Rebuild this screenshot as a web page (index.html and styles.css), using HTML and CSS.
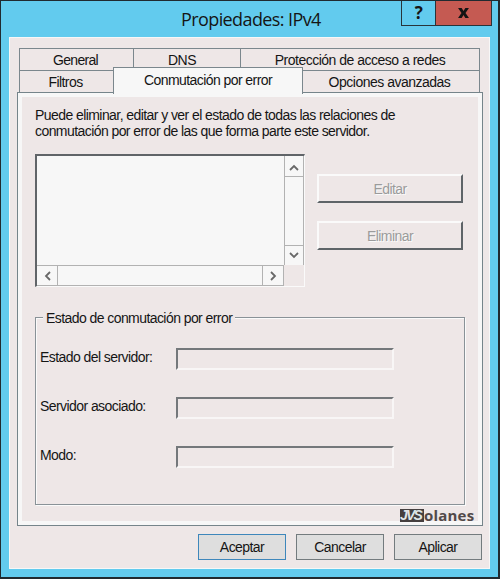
FILE: index.html
```html
<!DOCTYPE html>
<html lang="es">
<head>
<meta charset="utf-8">
<title>Propiedades: IPv4</title>
<link rel="stylesheet" href="styles.css">
</head>
<body>
<div class="window">
  <header class="titlebar">
    <h1 class="title">Propiedades: IPv4</h1>
    <div class="controls">
      <button class="help">?</button>
      <button class="close" aria-label="Cerrar"><svg width="11" height="10" viewBox="0 0 12 11"><path d="M0 0H4L6 3.2 8 0H12L8.2 5.5 12 11H8L6 7.8 4 11H0L3.8 5.5Z" fill="#141414"/></svg></button>
    </div>
  </header>
  <main class="client">
    <nav class="tabs">
      <div class="tabrow first">
        <span class="tab general">General</span><span class="tab dns">DNS</span><span class="tab proteccion">Protección de acceso a redes</span>
      </div>
      <div class="tabrow second">
        <span class="tab filtros">Filtros</span><span class="tab active">Conmutación por error</span><span class="tab opciones">Opciones avanzadas</span>
      </div>
    </nav>
    <section class="panel">
      <p class="intro"><span class="line">Puede eliminar, editar y ver el estado de todas las relaciones de</span><span class="line">conmutación por error de las que forma parte este servidor.</span></p>
      <div class="relations">
        <div class="listbox">
          <div class="list"></div>
          <div class="vscroll">
            <span class="arrow"><svg width="10" height="7" viewBox="0 0 10 7"><path d="M1 6L5 2 9 6"/></svg></span>
            <span class="arrow"><svg width="10" height="7" viewBox="0 0 10 7"><path d="M1 1L5 5 9 1"/></svg></span>
          </div>
          <div class="hscroll">
            <span class="arrow"><svg width="7" height="10" viewBox="0 0 7 10"><path d="M6 1L2 5 6 9"/></svg></span>
            <span class="arrow"><svg width="7" height="10" viewBox="0 0 7 10"><path d="M1 1L5 5 1 9"/></svg></span>
          </div>
          <div class="corner"></div>
        </div>
        <div class="actions">
          <button class="flat" disabled>Editar</button>
          <button class="flat" disabled>Eliminar</button>
        </div>
      </div>
      <div class="group">
        <h2 class="legend"><span>Estado de conmutación por error</span></h2>
        <div class="field"><span class="label">Estado del servidor:</span><span class="value"></span></div>
        <div class="field"><span class="label">Servidor asociado:</span><span class="value"></span></div>
        <div class="field"><span class="label">Modo:</span><span class="value"></span></div>
      </div>
      <div class="brand"><span class="mark">JVS</span><span class="rest">olanes</span></div>
    </section>
    <footer class="buttons">
      <button class="push default">Aceptar</button>
      <button class="push">Cancelar</button>
      <button class="push">Aplicar</button>
    </footer>
  </main>
</div>
</body>
</html>
```

FILE: styles.css
```css
* { box-sizing: border-box; }
body { margin: 0; font: 14px/16px "Liberation Sans", Arial, sans-serif; letter-spacing: -0.57px; color: #151515; }
button { font: inherit; letter-spacing: inherit; color: inherit; padding: 0; margin: 0; border-radius: 0; }
svg { display: block; }
.window { width: 500px; height: 579px; background: #62cbee; border: 1px solid #202a30; border-right-width: 2px; border-bottom-width: 2px; padding: 0 8px 8px 8px; }
.titlebar { height: 36px; display: grid; grid-template-columns: 1fr 91px; margin-right: -2px; }
.title { margin: 0; padding: 6px 0 0 172px; font: 18px/24px "Open Sans", sans-serif; letter-spacing: -0.6px; white-space: nowrap; }
.controls { display: flex; height: 25px; border: 1px solid #28343a; border-top: 0; }
.help { width: 34px; background: #62cbee; border: 0; border-right: 1px solid #28343a; font: bold 17px/24px "Open Sans", sans-serif; }
.close { flex: 1; background: #c55a52; border: 0; display: flex; align-items: center; justify-content: center; }
.client { width: 481px; height: 532px; background: #eee7e7; border: 1px solid #f7f7f7; padding: 10px 7px 0 7px; }
.tabs { position: relative; padding: 0 2px; }
.tabrow { display: flex; height: 22px; border: 1px solid #7b878d; border-bottom: 0; }
.tab { display: flex; justify-content: center; align-items: center; white-space: nowrap; }
.general { width: 114px; padding-right: 2px; border-right: 1px solid #7b878d; letter-spacing: -0.7px; }
.dns { width: 107px; padding-right: 10px; border-right: 1px solid #7b878d; }
.proteccion { flex: 1; letter-spacing: -0.5px; }
.filtros { width: 93px; padding-right: 2px; }
.active { width: 190px; height: 27px; margin-top: -4px; padding-bottom: 3px; background: #f7f7f7; border: 1px solid #7b878d; border-bottom: 0; z-index: 1; }
.opciones { flex: 1; padding-right: 3px; letter-spacing: -0.5px; }
.panel { width: 466px; height: 434px; background: #eee7e7; border: 1px solid #75848a; box-shadow: inset 0 0 0 4px #f7f7f7; padding: 14px 17px 0; }
.intro { margin: 0; height: 47px; }
.line { display: block; white-space: nowrap; }
.relations { display: flex; gap: 12px; }
.listbox { width: 270px; height: 133px; display: grid; grid-template: 1fr 21px / 1fr 20px; border: 2px solid #606468; border-right: 1px solid #fafafa; border-bottom: 1px solid #fafafa; background: #f7f7f7; }
.vscroll, .hscroll { display: flex; justify-content: space-between; border: 1px solid #b2b2b2; }
.vscroll { flex-direction: column; border-top: 0; border-bottom: 0; }
.hscroll { border-left: 0; }
.arrow { display: flex; align-items: center; justify-content: center; }
.arrow path { fill: none; stroke: #686868; stroke-width: 1.8; }
.vscroll .arrow { width: 18px; height: 20px; }
.hscroll .arrow { width: 21px; height: 19px; }
.vscroll .arrow:first-child { height: 21px; padding-top: 2px; border-bottom: 1px solid #b2b2b2; }
.vscroll .arrow:last-child { border-top: 1px solid #b2b2b2; }
.hscroll .arrow:first-child { border-right: 1px solid #b2b2b2; }
.hscroll .arrow:last-child { border-left: 1px solid #b2b2b2; }
.corner { background: #eee7e7; }
.actions { display: flex; flex-direction: column; gap: 18px; padding-top: 20px; }
.flat { width: 146px; height: 29px; background: #eee7e7; border: 2px solid #5e6468; border-top-color: #fafafa; border-left-color: #fafafa; color: #9b9b9b; text-shadow: 1px 1px #fafafa; }
.group { width: 430px; height: 188px; margin-top: 30px; border: 1px solid #899297; box-shadow: 1px 1px #fafafa, inset 1px 1px #fafafa; padding-left: 4px; }
.legend { margin: -8px 0 0 3px; height: 16px; font: inherit; }
.legend span { display: inline-block; background: #eee7e7; padding: 0 3px; white-space: nowrap; }
.field { display: flex; height: 22px; margin-top: 27px; }
.legend + .field { margin-top: 22px; }
.label { width: 136px; padding-top: 1px; white-space: nowrap; }
.value { width: 218px; border: 2px solid #74787b; border-right: 2px solid #f8f6f6; border-bottom: 2px solid #f8f6f6; }
.brand { display: flex; width: 76px; height: 13px; margin: 4px 0 0 365px; font: bold 15px/13px "Open Sans", sans-serif; letter-spacing: 0.2px; color: #514949; }
.mark { width: 24px; height: 13px; background: #453f3f; color: #dfe5e8; font: italic bold 14px/13px "Liberation Sans", sans-serif; letter-spacing: -1.8px; }
.buttons { display: flex; justify-content: flex-end; gap: 10px; margin-top: 8px; }
.push { width: 88px; height: 26px; background: #dedede; border: 1px solid #737b7e; }
.default { border-color: #3e87bb; }
```
